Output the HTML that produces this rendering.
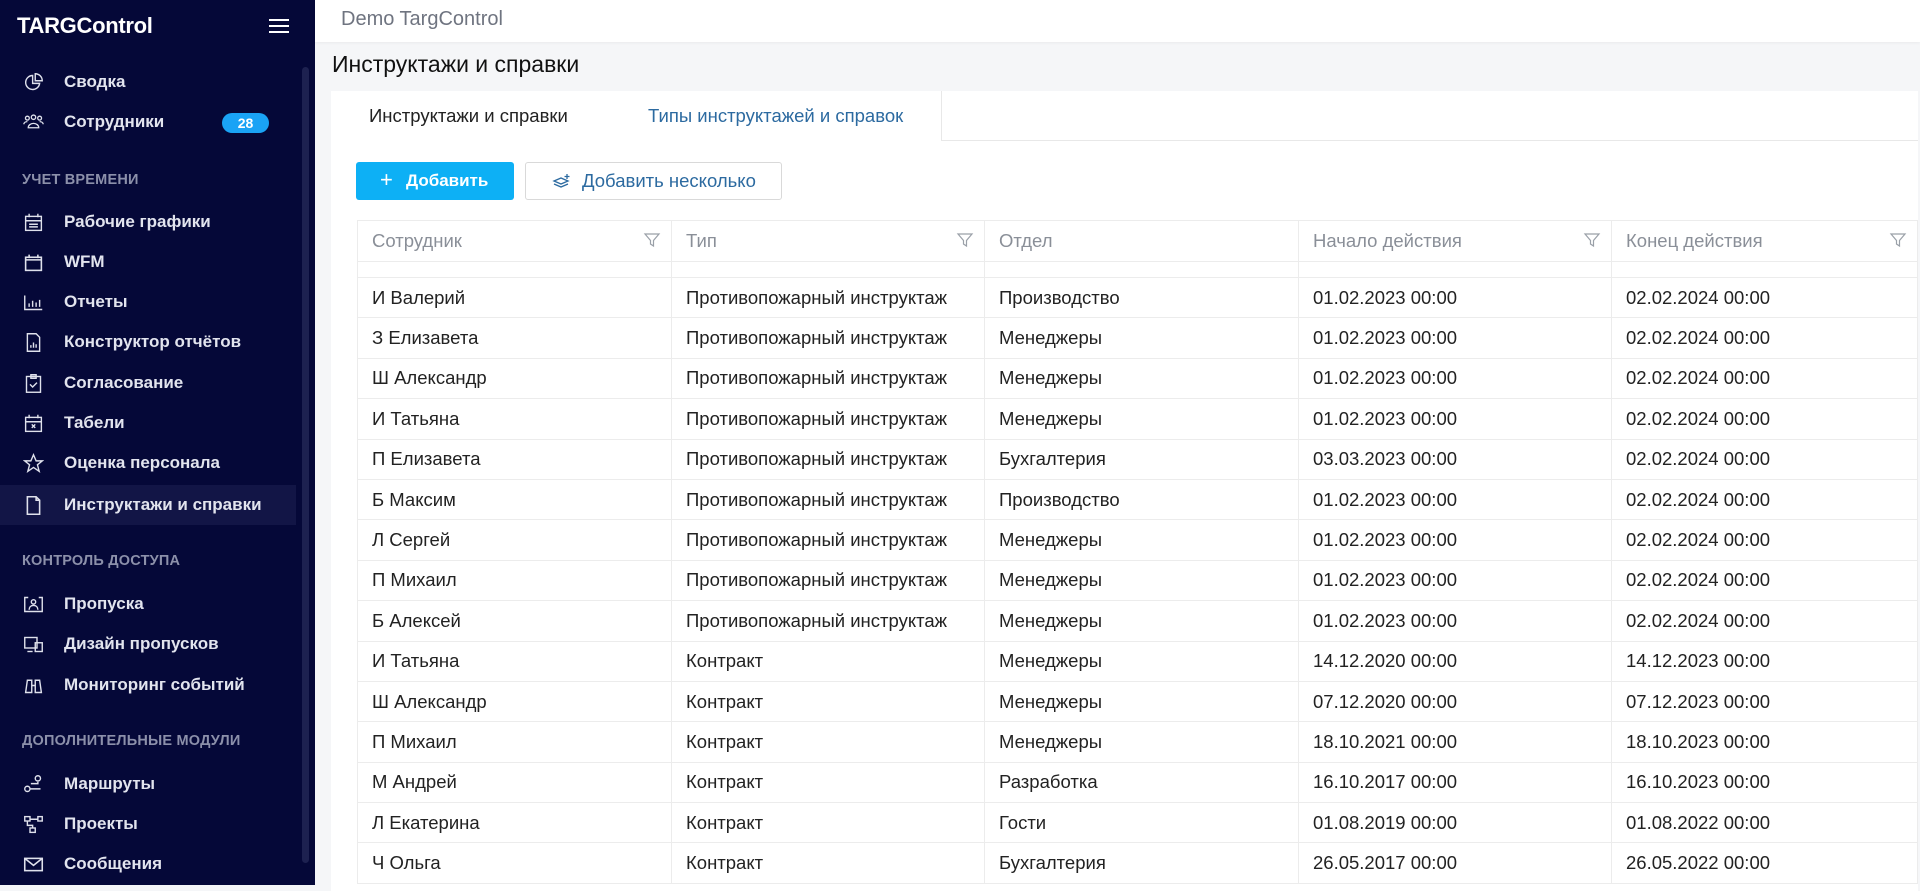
<!DOCTYPE html>
<html><head><meta charset="utf-8"><style>
*{margin:0;padding:0;box-sizing:border-box}
body{width:1920px;height:885px;overflow:hidden;background:#f5f6f8;font-family:"Liberation Sans",Arial,sans-serif;position:relative}
.sb{position:absolute;left:0;top:0;width:315px;height:885px;background:#050838;color:#e4e6f0}
.logo{position:absolute;left:17px;top:13px;font-weight:bold;font-size:22px;color:#fff;letter-spacing:-0.3px}
.ham{position:absolute;left:269px;top:19px;width:20px;height:14px;border-top:2px solid #fff;border-bottom:2px solid #fff}
.ham:after{content:"";position:absolute;left:0;top:4px;width:20px;height:2px;background:#fff}
.it{position:absolute;left:0;width:296px;height:40px;display:flex;align-items:center;font-size:17px;font-weight:bold;color:#e2e4ee}
.it svg{position:absolute;left:23px;width:21px;height:21px}
.it span{position:absolute;left:64px}
.it.act{background:#121546}
.sec{position:absolute;left:22px;font-size:14.5px;font-weight:bold;color:#8c90aa;letter-spacing:0.2px}
.badge{position:absolute;left:222px;top:113px;width:47px;height:20px;border-radius:10px;background:#1aa3f5;color:#fff;font-size:14px;font-weight:bold;text-align:center;line-height:20px}
.scr{position:absolute;left:302px;top:67px;width:7px;height:796px;border-radius:4px;background:#1d2150}
.top{position:absolute;left:315px;top:0;width:1605px;height:42px;background:#fff;box-shadow:0 1px 3px rgba(0,0,0,.05)}
.top div{position:absolute;left:26px;top:8px;font-size:20px;color:#6f7480}
.title{position:absolute;left:332px;top:51px;font-size:23px;color:#111}
.card{position:absolute;left:331px;top:91px;width:1587px;height:800px;background:#fff}
.tabs{position:absolute;left:0;top:0;width:100%;height:50px;border-bottom:1px solid #e8e8e8;background:#fff}
.tab{position:absolute;top:0;height:50px;line-height:50px;font-size:18.5px}
.t1{left:0;width:278px;padding-left:38px;color:#222;background:#fff;height:51px}
.t2{left:278px;width:333px;padding-left:39px;color:#2c6aa0;border-right:1px solid #e8e8e8;background:#fff}
.btn1{position:absolute;left:356px;top:162px;width:158px;height:38px;background:#0db0f5;border-radius:3px;color:#fff;font-weight:bold;font-size:17px;line-height:38px}
.btn2{position:absolute;left:525px;top:162px;width:257px;height:38px;border:1px solid #d9d9d9;border-radius:3px;color:#2c6aa0;font-size:18.5px;line-height:36px;background:#fff}
table{position:absolute;left:357px;top:220px;width:1560px;border-collapse:collapse;font-size:18.5px;color:#222;table-layout:fixed}
td,th{border:1px solid #ececec;padding:0 0 0 14px;text-align:left;font-weight:normal;white-space:nowrap;overflow:hidden}
th{height:41px;color:#8a8f98;position:relative}
th svg{position:absolute;right:10px;top:10px}
td{height:40.4px}
tr.part td{height:16px}
</style></head><body>
<div class="sb">
<div class="logo">TARGControl</div><div class="ham"></div>
<div class="scr"></div>
<div class="it" style="top:62px"><svg viewBox="0 0 24 24" fill="none" stroke="#dfe1ec" stroke-width="1.6"><path d="M11 4a8 8 0 1 0 8 9h-8z"/><path d="M14 2v8h8a8 8 0 0 0-8-8z"/></svg><span>Сводка</span></div>
<div class="it" style="top:102px"><svg viewBox="0 0 24 24" fill="none" stroke="#dfe1ec" stroke-width="1.5"><circle cx="5" cy="7" r="2.2"/><circle cx="12" cy="6" r="2.5"/><circle cx="19" cy="7" r="2.2"/><path d="M1 14c0-2 2-3 4-3M23 14c0-2-2-3-4-3M6 18c0-3 3-5 6-5s6 2 6 5z"/></svg><span>Сотрудники</span></div>
<div class="badge">28</div>
<div class="sec" style="top:172px">УЧЕТ ВРЕМЕНИ</div>
<div class="it" style="top:202px"><svg viewBox="0 0 24 24" fill="none" stroke="#dfe1ec" stroke-width="1.6"><rect x="3" y="5" width="18" height="16"/><path d="M7 2v4M17 2v4M3 10h18M7 14h10M7 17h10"/></svg><span>Рабочие графики</span></div>
<div class="it" style="top:242px"><svg viewBox="0 0 24 24" fill="none" stroke="#dfe1ec" stroke-width="1.8"><rect x="3" y="6" width="18" height="15"/><path d="M7 3v4M17 3v4M3 9h18"/></svg><span>WFM</span></div>
<div class="it" style="top:282px"><svg viewBox="0 0 24 24" fill="none" stroke="#dfe1ec" stroke-width="1.6"><path d="M2 4v16h20M7 17v-4M11 17v-7M15 17v-5M19 17v-8"/></svg><span>Отчеты</span></div>
<div class="it" style="top:322px"><svg viewBox="0 0 24 24" fill="none" stroke="#dfe1ec" stroke-width="1.6"><path d="M5 2h10l4 4v16H5z"/><path d="M9 18v-3M12 18v-6M15 18v-4"/></svg><span>Конструктор отчётов</span></div>
<div class="it" style="top:363px"><svg viewBox="0 0 24 24" fill="none" stroke="#dfe1ec" stroke-width="1.6"><rect x="4" y="4" width="16" height="18"/><path d="M9 2h6v4H9zM8 13l3 3 5-5"/></svg><span>Согласование</span></div>
<div class="it" style="top:403px"><svg viewBox="0 0 24 24" fill="none" stroke="#dfe1ec" stroke-width="1.6"><rect x="3" y="5" width="18" height="16"/><path d="M7 2v4M17 2v4M3 10h18M10 13l4 4M14 13l-4 4"/></svg><span>Табели</span></div>
<div class="it" style="top:443px"><svg viewBox="0 0 24 24" fill="none" stroke="#dfe1ec" stroke-width="1.6"><path d="M12 2l3 7h7l-5.5 4.5 2 7.5-6.5-4.5-6.5 4.5 2-7.5L2 9h7z"/></svg><span>Оценка персонала</span></div>
<div class="it act" style="top:485px"><svg viewBox="0 0 24 24" fill="none" stroke="#dfe1ec" stroke-width="1.8"><path d="M5 2h10l4 4v16H5z"/><path d="M15 2v4h4"/></svg><span>Инструктажи и справки</span></div>
<div class="sec" style="top:553px">КОНТРОЛЬ ДОСТУПА</div>
<div class="it" style="top:584px"><svg viewBox="0 0 24 24" fill="none" stroke="#dfe1ec" stroke-width="1.6"><path d="M6 4H2v16h20V4h-4"/><circle cx="12" cy="9" r="2.5"/><path d="M7 18c0-3 2-5 5-5s5 2 5 5"/></svg><span>Пропуска</span></div>
<div class="it" style="top:624px"><svg viewBox="0 0 24 24" fill="none" stroke="#dfe1ec" stroke-width="1.6"><rect x="2" y="4" width="14" height="12"/><rect x="14" y="10" width="8" height="10"/><path d="M5 20h6"/></svg><span>Дизайн пропусков</span></div>
<div class="it" style="top:665px"><svg viewBox="0 0 24 24" fill="none" stroke="#dfe1ec" stroke-width="1.6"><path d="M3 20l2-14h5v14zM21 20l-2-14h-5v14zM10 12h4"/></svg><span>Мониторинг событий</span></div>
<div class="sec" style="top:733px">ДОПОЛНИТЕЛЬНЫЕ МОДУЛИ</div>
<div class="it" style="top:764px"><svg viewBox="0 0 24 24" fill="none" stroke="#dfe1ec" stroke-width="1.6"><circle cx="5" cy="17" r="3"/><circle cx="17" cy="5" r="3"/><path d="M17 9v2H9M8 17h12"/></svg><span>Маршруты</span></div>
<div class="it" style="top:804px"><svg viewBox="0 0 24 24" fill="none" stroke="#dfe1ec" stroke-width="1.6"><rect x="2" y="3" width="6" height="5"/><rect x="17" y="3" width="5" height="5"/><rect x="8" y="16" width="6" height="5"/><path d="M8 6h9M5 8v5h6v3"/></svg><span>Проекты</span></div>
<div class="it" style="top:844px"><svg viewBox="0 0 24 24" fill="none" stroke="#dfe1ec" stroke-width="1.8"><rect x="2" y="5" width="20" height="14"/><path d="M2 5l10 8 10-8"/></svg><span>Сообщения</span></div>
</div>
<div class="top"><div>Demo TargControl</div></div>
<div class="title">Инструктажи и справки</div>
<div class="card"><div class="tabs"><div class="tab t1">Инструктажи и справки</div><div class="tab t2">Типы инструктажей и справок</div></div></div>
<div class="btn1"><span style="position:absolute;left:24px;font-size:22px;font-weight:normal;top:-1px">+</span><span style="position:absolute;left:50px">Добавить</span></div>
<div class="btn2"><svg style="position:absolute;left:26px;top:10px" width="20" height="16" viewBox="0 0 20 16" fill="none" stroke="#2c6aa0" stroke-width="1.3"><path d="M2 8l7-3 7 3-7 3zM2 11l7 3 7-3M15 1v5M12.5 3.5h5"/></svg><span style="position:absolute;left:56px">Добавить несколько</span></div>
<table>
<colgroup><col style="width:314px"><col style="width:313px"><col style="width:314px"><col style="width:313px"><col style="width:306px"></colgroup>
<tr><th>Сотрудник<svg width="18" height="18" viewBox="0 0 18 18" fill="none" stroke="#9aa0a8" stroke-width="1.2"><path d="M2 3h14l-5.5 6.5V15L7.5 13V9.5z"/></svg></th><th>Тип<svg width="18" height="18" viewBox="0 0 18 18" fill="none" stroke="#9aa0a8" stroke-width="1.2"><path d="M2 3h14l-5.5 6.5V15L7.5 13V9.5z"/></svg></th><th>Отдел</th><th>Начало действия<svg width="18" height="18" viewBox="0 0 18 18" fill="none" stroke="#9aa0a8" stroke-width="1.2"><path d="M2 3h14l-5.5 6.5V15L7.5 13V9.5z"/></svg></th><th>Конец действия<svg width="18" height="18" viewBox="0 0 18 18" fill="none" stroke="#9aa0a8" stroke-width="1.2"><path d="M2 3h14l-5.5 6.5V15L7.5 13V9.5z"/></svg></th></tr>
<tr class="part"><td></td><td></td><td></td><td></td><td></td></tr>
<tr><td>И Валерий</td><td>Противопожарный инструктаж</td><td>Производство</td><td>01.02.2023 00:00</td><td>02.02.2024 00:00</td></tr>
<tr><td>З Елизавета</td><td>Противопожарный инструктаж</td><td>Менеджеры</td><td>01.02.2023 00:00</td><td>02.02.2024 00:00</td></tr>
<tr><td>Ш Александр</td><td>Противопожарный инструктаж</td><td>Менеджеры</td><td>01.02.2023 00:00</td><td>02.02.2024 00:00</td></tr>
<tr><td>И Татьяна</td><td>Противопожарный инструктаж</td><td>Менеджеры</td><td>01.02.2023 00:00</td><td>02.02.2024 00:00</td></tr>
<tr><td>П Елизавета</td><td>Противопожарный инструктаж</td><td>Бухгалтерия</td><td>03.03.2023 00:00</td><td>02.02.2024 00:00</td></tr>
<tr><td>Б Максим</td><td>Противопожарный инструктаж</td><td>Производство</td><td>01.02.2023 00:00</td><td>02.02.2024 00:00</td></tr>
<tr><td>Л Сергей</td><td>Противопожарный инструктаж</td><td>Менеджеры</td><td>01.02.2023 00:00</td><td>02.02.2024 00:00</td></tr>
<tr><td>П Михаил</td><td>Противопожарный инструктаж</td><td>Менеджеры</td><td>01.02.2023 00:00</td><td>02.02.2024 00:00</td></tr>
<tr><td>Б Алексей</td><td>Противопожарный инструктаж</td><td>Менеджеры</td><td>01.02.2023 00:00</td><td>02.02.2024 00:00</td></tr>
<tr><td>И Татьяна</td><td>Контракт</td><td>Менеджеры</td><td>14.12.2020 00:00</td><td>14.12.2023 00:00</td></tr>
<tr><td>Ш Александр</td><td>Контракт</td><td>Менеджеры</td><td>07.12.2020 00:00</td><td>07.12.2023 00:00</td></tr>
<tr><td>П Михаил</td><td>Контракт</td><td>Менеджеры</td><td>18.10.2021 00:00</td><td>18.10.2023 00:00</td></tr>
<tr><td>М Андрей</td><td>Контракт</td><td>Разработка</td><td>16.10.2017 00:00</td><td>16.10.2023 00:00</td></tr>
<tr><td>Л Екатерина</td><td>Контракт</td><td>Гости</td><td>01.08.2019 00:00</td><td>01.08.2022 00:00</td></tr>
<tr><td>Ч Ольга</td><td>Контракт</td><td>Бухгалтерия</td><td>26.05.2017 00:00</td><td>26.05.2022 00:00</td></tr>
</table>
</body></html>
